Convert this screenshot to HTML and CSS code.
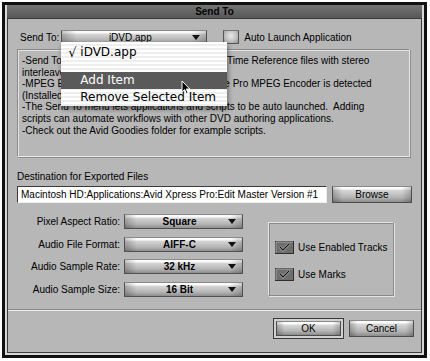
FILE: index.html
```html
<!DOCTYPE html>
<html lang="en">
<head>
    <meta charset="UTF-8">
    <title>Send To</title>
    <link rel="stylesheet" href="styles.css">
</head>
<body>
    <div class="window">
        <div class="titlebar">Send To</div>
        <div class="frame">
            <div class="content">
                <div class="top-row">
                    <span class="send-label">Send To:</span>
                    <div class="popup send-popup">
                        <span class="popup-value">iDVD.app</span>
                        <span class="arrow"></span>
                        <!-- open popup menu -->
                        <div class="menu">
                            <div class="menu-item checked"><span class="tick">√</span>iDVD.app</div>
                            <div class="menu-gap"></div>
                            <div class="menu-item selected">Add Item</div>
                            <div class="menu-item">Remove Selected Item</div>
                            <svg class="cursor" width="10" height="15" viewBox="0 0 10 15">
                                <path d="M1 1 L1 12 L3.6 9.6 L5.6 14 L7.2 13.3 L5.3 9 L8.8 9 Z" fill="#000" stroke="#fff" stroke-width="1"/>
                            </svg>
                        </div>
                    </div>
                    <span class="box"></span>
                    <span class="box-label">Auto Launch Application</span>
                </div>

                <div class="info">
                    -Send To will export and launch the new QuickTime Reference files with stereo<br>
                    interleaved audio files.<br>
                    -MPEG Export will create MPEG files when the Pro MPEG Encoder is detected<br>
                    (Installed with Avid Xpress Pro).<br>
                    -The Send To menu lets applications and scripts to be auto launched.&nbsp; Adding<br>
                    scripts can automate workflows with other DVD authoring applications.<br>
                    -Check out the Avid Goodies folder for example scripts.
                </div>

                <div class="dest-label">Destination for Exported Files</div>
                <div class="dest-row">
                    <div class="field">Macintosh HD:Applications:Avid Xpress Pro:Edit Master Version #1</div>
                    <div class="btn browse">Browse</div>
                </div>

                <div class="settings">
                    <div class="rows">
                        <span class="row-label">Pixel Aspect Ratio:</span>
                        <div class="popup"><span class="popup-value">Square</span><span class="arrow"></span></div>
                        <span class="row-label">Audio File Format:</span>
                        <div class="popup"><span class="popup-value">AIFF-C</span><span class="arrow"></span></div>
                        <span class="row-label">Audio Sample Rate:</span>
                        <div class="popup"><span class="popup-value">32 kHz</span><span class="arrow"></span></div>
                        <span class="row-label">Audio Sample Size:</span>
                        <div class="popup"><span class="popup-value">16 Bit</span><span class="arrow"></span></div>
                    </div>

                    <div class="group">
                        <div class="option">
                            <svg class="checkbox" width="19" height="13" viewBox="0 0 19 13">
                                <rect x="0.5" y="0.5" width="18" height="12" fill="#6e6e6e" stroke="#2e2e2e"/>
                                <path d="M1 12 L1 1 L18 1" fill="none" stroke="#a4a4a4"/>
                                <path d="M5 6 L8 9 L14 3" fill="none" stroke="#dcdcdc" stroke-width="2.4"/>
                                <path d="M5 6 L8 9 L14 3" fill="none" stroke="#111" stroke-width="1.3"/>
                            </svg>
                            <span>Use Enabled Tracks</span>
                        </div>
                        <div class="option">
                            <svg class="checkbox" width="19" height="13" viewBox="0 0 19 13">
                                <rect x="0.5" y="0.5" width="18" height="12" fill="#6e6e6e" stroke="#2e2e2e"/>
                                <path d="M1 12 L1 1 L18 1" fill="none" stroke="#a4a4a4"/>
                                <path d="M5 6 L8 9 L14 3" fill="none" stroke="#dcdcdc" stroke-width="2.4"/>
                                <path d="M5 6 L8 9 L14 3" fill="none" stroke="#111" stroke-width="1.3"/>
                            </svg>
                            <span>Use Marks</span>
                        </div>
                    </div>
                </div>
            </div>

            <div class="separator"></div>

            <div class="actions">
                <div class="default-ring"><div class="btn ok">OK</div></div>
                <div class="btn cancel">Cancel</div>
            </div>
        </div>
    </div>
</body>
</html>
```

FILE: styles.css
```css
* {
    box-sizing: border-box;
}

body {
    margin: 0;
    background: #fff;
    font-family: "Liberation Sans", Arial, sans-serif;
    font-size: 10px;
    color: #000;
}

.window {
    margin: 2px;
    width: 425px;
    height: 356px;
    border: 3px solid #111;
    padding: 0 2px 2px;
    background: #d8d8d8;
    display: flex;
    flex-direction: column;
}

.titlebar {
    height: 14px;
    line-height: 14px;
    text-align: center;
    font-weight: bold;
    color: #050505;
    background: linear-gradient(#747474, #585858);
    border-bottom: 1px solid #3a3a3a;
}

.frame {
    flex: 1;
    display: flex;
    flex-direction: column;
    border: 1px solid #3c3c3c;
    border-top: 0;
    background: #b7b7b7;
}

.content {
    padding: 0 10px 0 9px;
}

/* top row */
.top-row {
    display: flex;
    align-items: center;
    height: 14px;
    margin-top: 11px;
}

.send-label {
    margin-left: 3px;
    margin-right: 2px;
}

.send-popup {
    width: 146px;
    height: 14px;
}

.send-popup .popup-value {
    font-weight: normal;
}

.box {
    width: 16px;
    height: 14px;
    margin-left: 16px;
    border: 1px solid #555;
    border-top-color: #777;
    background: radial-gradient(circle at 50% 40%, #eaeaea, #bdbdbd 60%, #8e8e8e);
}

.box-label {
    margin-left: 5px;
}

/* popups and buttons */
.popup {
    position: relative;
    display: flex;
    align-items: center;
    height: 15px;
    border: 1px solid #505050;
    border-top-color: #8a8a8a;
    background:
        linear-gradient(to right, rgba(0, 0, 0, 0.22), rgba(0, 0, 0, 0) 10%, rgba(0, 0, 0, 0) 90%, rgba(0, 0, 0, 0.18)),
        linear-gradient(#fbfbfb 0, #fbfbfb 2px, #d6d6d6 3px, #b4b4b4 70%, #8e8e8e 100%);
}

.popup-value {
    flex: 1;
    text-align: center;
    font-weight: bold;
    padding-left: 6px;
}

.arrow {
    width: 0;
    height: 0;
    margin-right: 6px;
    border-left: 4px solid transparent;
    border-right: 4px solid transparent;
    border-top: 5px solid #111;
}

.btn {
    display: flex;
    align-items: center;
    justify-content: center;
    height: 17px;
    border: 1px solid #4c4c4c;
    border-top-color: #8a8a8a;
    background:
        linear-gradient(to right, rgba(0, 0, 0, 0.22), rgba(0, 0, 0, 0) 12%, rgba(0, 0, 0, 0) 88%, rgba(0, 0, 0, 0.2)),
        linear-gradient(#fdfdfd 0, #fdfdfd 2px, #d8d8d8 3px, #b4b4b4 70%, #8c8c8c 100%);
}

/* menu */
.menu {
    position: absolute;
    left: -1px;
    top: 11px;
    width: 166px;
    padding-top: 2px;
    background: repeating-linear-gradient(#ffffff 0, #ffffff 2px, #eeeeee 2px, #eeeeee 4px);
    box-shadow: 1px 3px 5px rgba(0, 0, 0, 0.45);
    font-family: "DejaVu Sans", sans-serif;
    font-size: 12px;
    font-weight: normal;
    color: #000;
    z-index: 5;
}

.menu-item {
    position: relative;
    height: 17px;
    line-height: 17px;
    padding-left: 19px;
    white-space: nowrap;
}

.tick {
    position: absolute;
    left: 7px;
    font-size: 13px;
}

.menu-gap {
    height: 11px;
}

.menu-item.selected {
    background: #5a5a5a;
    color: #fff;
}

.cursor {
    position: absolute;
    left: 120px;
    top: 38px;
}

/* info text */
.info {
    margin-top: 5px;
    width: 393px;
    height: 108px;
    padding: 5px 4px;
    line-height: 11.6px;
    border: 1px solid;
    border-color: #8a8a8a #e8e8e8 #e8e8e8 #8a8a8a;
    box-shadow: inset 1px 1px 0 #e2e2e2, 1px 1px 0 #8e8e8e;
    white-space: nowrap;
    overflow: hidden;
}

/* destination */
.dest-label {
    margin-top: 14px;
    line-height: 12px;
}

.dest-row {
    display: flex;
    gap: 5px;
    margin-top: 3px;
    width: 395px;
}

.field {
    width: 310px;
    height: 17px;
    line-height: 15px;
    padding-left: 3px;
    background: #fff;
    border: 1px solid;
    border-color: #3a3a3a #f0f0f0 #f0f0f0 #3a3a3a;
    white-space: nowrap;
    overflow: hidden;
}

.browse {
    width: 80px;
}

/* settings */
.settings {
    display: flex;
    align-items: flex-start;
    margin-top: 11px;
}

.rows {
    display: grid;
    grid-template-columns: 103px 119px;
    column-gap: 4px;
    row-gap: 7.5px;
    align-items: center;
}

.row-label {
    text-align: right;
}

.group {
    width: 126px;
    height: 74px;
    margin-left: 25px;
    margin-top: 8px;
    padding: 18px 0 0 6px;
    border: 1px solid;
    border-color: #e4e4e4 #8a8a8a #8a8a8a #e4e4e4;
    box-shadow: 1px 1px 0 #e4e4e4, inset 1px 1px 0 #8a8a8a;
}

.option {
    display: flex;
    align-items: center;
    gap: 4px;
    height: 13px;
    margin-bottom: 14px;
}

/* bottom */
.separator {
    margin-top: 12px;
    border-top: 1px solid #8a8a8a;
    border-bottom: 1px solid #ececec;
}

.actions {
    display: flex;
    justify-content: flex-end;
    align-items: center;
    gap: 5px;
    padding: 7px 7px 0 0;
}

.default-ring {
    padding: 2px;
    border: 1px solid #3a3a3a;
    background: #d0d0d0;
}

.ok {
    width: 65px;
    height: 15px;
}

.cancel {
    width: 65px;
    height: 17px;
}
```
